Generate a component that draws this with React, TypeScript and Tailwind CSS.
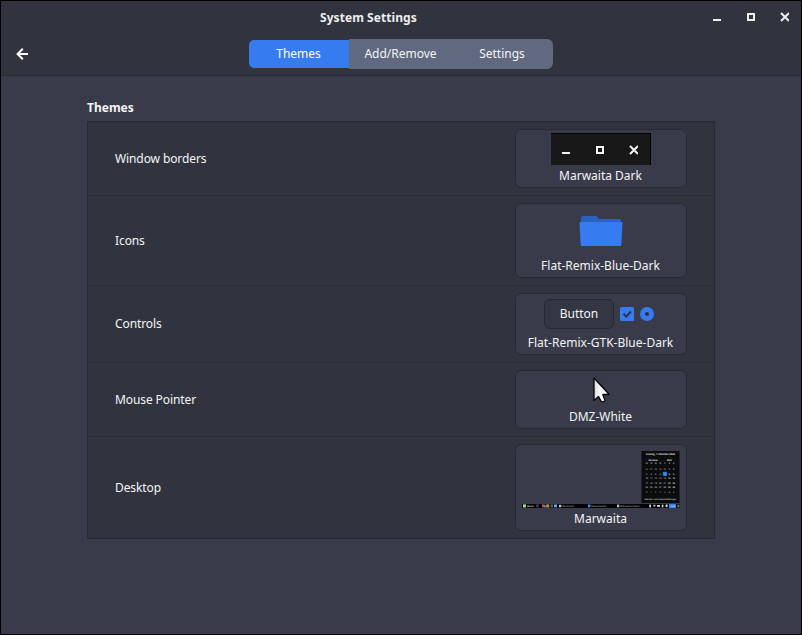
import type { ReactNode } from 'react';

function WindowControls({ color }: { color: string }) {
  return (
    <svg width="76" height="10" viewBox="0 0 76 10" fill="none" stroke={color}>
      <path d="M0 8H8" strokeWidth="2" />
      <path d="M35 2H41V8H35Z" strokeWidth="2" />
      <path d="M68 1L76 9M76 1L68 9" strokeWidth="2" />
    </svg>
  );
}

const days = [
  ['M', 'D', 'M', 'D', 'F', 'S', 'S'],
  ['26', '27', '28', '29', '30', '1', '2'],
  ['3', '4', '5', '6', '7', '8', '9'],
  ['10', '11', '12', '13', '14', '15', '16'],
  ['17', '18', '19', '20', '21', '22', '23'],
  ['24', '25', '26', '27', '28', '29', '30'],
  ['31', '1', '2', '3', '4', '5', '6'],
];
const rowY = [13.3, 19, 23.7, 28.3, 32.7, 37.3, 42];
const colX = [124.7, 129.2, 133.7, 138.3, 142.8, 147.3, 151.7];

function DesktopPreview() {
  return (
    <svg width="158" height="57" viewBox="0 0 158 57" textRendering="geometricPrecision" className="font-['Noto_Sans',sans-serif]">
      <rect x="119.5" y="0" width="38" height="52" fill="#0b0c0e" />
      <g fill="#e4e4e4" textAnchor="middle">
        <text x="138.5" y="4.4" fontSize="2.5" fontWeight="700" textLength="29">Freitag, 7. Oktober 2022</text>
        <text x="131.3" y="9.6" fontSize="2.3" fontWeight="700">Oktober</text>
        <text x="147.3" y="9.6" fontSize="2.3" fontWeight="700">2022</text>
        <text x="124" y="9.6" fontSize="2.4" opacity=".6">‹</text>
        <text x="139" y="9.6" fontSize="2.4" opacity=".6">›</text>
        <text x="142" y="9.6" fontSize="2.4" opacity=".6">‹</text>
        <text x="153" y="9.6" fontSize="2.4" opacity=".6">›</text>
        <rect x="140.8" y="20.7" width="4.2" height="4.2" rx=".8" fill="#2080f0" />
        {days.map((row, r) =>
          row.map((d, c) => (
            <text
              key={`${r}-${c}`}
              x={colX[c]}
              y={rowY[r]}
              fontSize="2.1"
              fontWeight={c > 4 ? 700 : 400}
              opacity={r === 6 || (r === 1 && c < 5) ? 0.7 : 1}
            >
              {d}
            </text>
          )),
        )}
        <text x="138.5" y="49.2" fontSize="2.2" textLength="32">Datums- und Zeiteinstellungen</text>
      </g>
      <rect x="0" y="53" width="158" height="4" fill="#030405" />
      <rect x="1" y="53.3" width="3" height="3.2" fill="#a9d48a" />
      <rect x="14" y="53.4" width="3" height="3" fill="#303a48" />
      <rect x="20" y="53.4" width="3" height="3" fill="#b45646" />
      <rect x="22" y="54.6" width="2" height="1.8" fill="#4b8fd6" />
      <rect x="24.2" y="53.4" width="3" height="3" fill="#d8983c" />
      <rect x="25.2" y="55" width="2" height="1.5" fill="#4aa564" />
      <rect x="28.4" y="53.4" width="2.6" height="3" fill="#52606c" />
      <rect x="32" y="53.4" width="3" height="3" fill="#5f9ee8" />
      <rect x="37" y="53.8" width="2.2" height="2.4" fill="#c8ccd0" />
      <rect x="66" y="53.6" width="2.4" height="2.6" fill="#4f94e8" />
      <rect x="95" y="53.6" width="2.2" height="2.6" fill="#d5b7b2" />
      <g fill="#c9c9c9" fontSize="2.3">
        <text x="5" y="55.9" fontWeight="700">Menü</text>
        <text x="39.6" y="55.9" textLength="12">[Terminal]</text>
        <text x="69" y="55.9" textLength="15">[Downloads]</text>
        <text x="97.6" y="55.9" textLength="22">[Marwaita Publis...</text>
      </g>
      <g fill="#d8d8d8">
        <rect x="127.3" y="53.6" width="1.7" height="2.8" />
        <rect x="131.4" y="53.8" width="2" height="1.6" />
        <rect x="135" y="54" width="3" height="1.8" />
        <rect x="139.8" y="53.6" width="1.6" height="2.8" />
        <rect x="143.6" y="53.5" width="2" height="2.6" fill="#d3d9ae" />
        <rect x="155.3" y="53.6" width="2.2" height="2.8" opacity=".5" />
      </g>
      <rect x="147" y="53" width="7" height="4" fill="#2c86f4" />
      <text x="148" y="55.9" fontSize="2" fill="#fff">13:20</text>
    </svg>
  );
}

function Row({ label, name, height, last, children }: {
  label: string;
  name: string;
  height: string;
  last?: boolean;
  children: ReactNode;
}) {
  return (
    <div className={`flex items-center justify-between px-[27px] py-[7px] ${last ? '' : 'border-b border-[#2b2e38]'}`}>
      <span className="leading-4 tracking-[-0.1px]">{label}</span>
      <button className={`flex w-[172px] flex-col items-center justify-between rounded-[6px] border border-[#272a34] bg-[#393b4a] px-1 pt-[3px] pb-[3px] ${height}`}>
        {children}
        <span className="pr-px leading-4 whitespace-nowrap">{name}</span>
      </button>
    </div>
  );
}

export default function App() {
  return (
    <div className="flex h-[635px] w-[802px] flex-col border border-black bg-[#393b4a] font-['Noto_Sans',sans-serif] text-[12px] text-[#f3f4f5]">
      <header className="h-[75px] border-b border-[#272a34] bg-[#31343f]">
        <div className="flex h-[33px] items-center justify-between pr-3 pl-[319px]">
          <h1 className="leading-4 font-bold tracking-[0.06px] text-[#eeeeec]">System Settings</h1>
          <div className="-mt-[2px]">
            <WindowControls color="#eeeeec" />
          </div>
        </div>
        <div className="flex h-10 items-center">
          <button className="ml-[15px] w-[233px]">
            <svg width="13" height="12" viewBox="0 0 13 12" fill="none" stroke="#fff" strokeWidth="2">
              <path d="M1.5 6H12M6.8 .8L1.6 6L6.8 11.2" />
            </svg>
          </button>
          <nav className="flex items-center leading-4">
            <button className="h-7 w-[100px] rounded-l-[5px] bg-[#367bf0] pr-px text-white">Themes</button>
            <button className="h-[30px] w-[102px] bg-[#606980] pl-px">Add/Remove</button>
            <button className="h-[30px] w-[102px] rounded-r-[6px] bg-[#606980]">Settings</button>
          </nav>
        </div>
      </header>

      <main className="px-[86px] pt-6">
        <h2 className="mb-[5px] leading-4 font-bold">Themes</h2>
        <section className="border border-[#272a34] bg-[#31343f]">
          <Row label="Window borders" name="Marwaita Dark" height="h-[59px]">
            <div className="flex h-8 w-[100px] items-center justify-center border-t border-r border-black bg-[#181818] pr-[1px]">
              <WindowControls color="#f2f1f0" />
            </div>
          </Row>
          <Row label="Icons" name="Flat-Remix-Blue-Dark" height="h-[75px]">
            <svg width="48" height="48" viewBox="0 0 48 48">
              <path d="M4 11a2 2 0 0 1 2-2H18.5Q19.5 9 20.3 9.8L22 12H42a2 2 0 0 1 2 2V26H4Z" fill="#2b62c0" />
              <path d="M3.6 15H44.4Q45.6 15 45.5 16L44.3 38Q44.2 39 43.2 39H4.8Q3.8 39 3.7 38L2.5 16Q2.4 15 3.6 15Z" fill="#367bf0" />
            </svg>
          </Row>
          <Row label="Controls" name="Flat-Remix-GTK-Blue-Dark" height="h-[62px]">
            <div className="mt-[2px] flex items-center gap-[6px] pr-[4px]">
              <span className="flex h-[30px] w-[70px] items-center justify-center rounded-[6px] border border-[#262932] bg-[#333743] leading-4">Button</span>
              <svg width="34" height="14" viewBox="0 0 34 14">
                <rect width="14" height="14" rx="1.5" fill="#367bf0" />
                <path d="M3.5 6.8L6.2 9.5L11 4.5" fill="none" stroke="#2d3340" strokeWidth="2" />
                <circle cx="27" cy="7" r="7" fill="#367bf0" />
                <circle cx="27" cy="7" r="2.1" fill="#2d3340" />
              </svg>
            </div>
          </Row>
          <Row label="Mouse Pointer" name="DMZ-White" height="h-[59px]">
            <svg width="32" height="32" viewBox="0 0 32 32">
              <defs>
                <linearGradient id="pointer" x1="0" y1="0" x2="1" y2="0">
                  <stop offset="0" stopColor="#dcdcdc" />
                  <stop offset=".5" stopColor="#fff" />
                </linearGradient>
              </defs>
              <path d="M9 4V26.5L13.5 22.5L16.3 27.5Q18 28.5 20 26.6L17.8 20.5H24.2Z" fill="url(#pointer)" stroke="#050507" strokeWidth="1.3" strokeLinejoin="round" />
            </svg>
          </Row>
          <Row label="Desktop" name="Marwaita" height="h-[87px]" last>
            <div className="pt-[3px]">
              <DesktopPreview />
            </div>
          </Row>
        </section>
      </main>
    </div>
  );
}
